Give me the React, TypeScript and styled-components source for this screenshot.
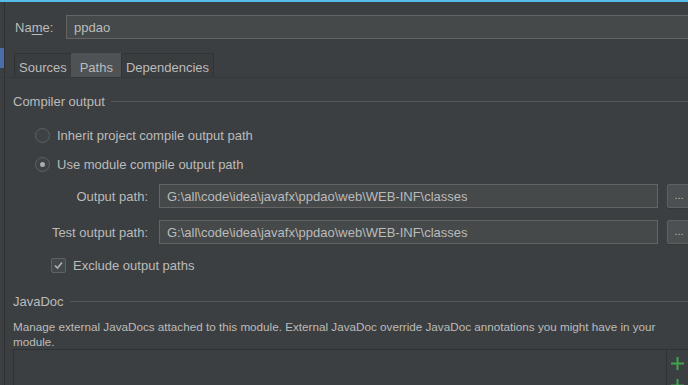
import React from "react";
import styled, { createGlobalStyle } from "styled-components";

const Global = createGlobalStyle`
  html, body { margin: 0; padding: 0; background: #3c3f41; }
  body { font-family: "Liberation Sans", Arial, sans-serif; font-size: 13px; color: #bbbbbb; }
`;

const Frame = styled.div`
  width: 688px;
  height: 385px;
  overflow: hidden;
  box-sizing: border-box;
  border-top: 2px solid #55bdea;
  background: #3c3f41;
  display: flex;
`;

const Sidebar = styled.div`
  width: 4px;
  flex-shrink: 0;
  border-right: 1px solid #2e3032;
  padding-top: 46px;
`;

const Marker = styled.div`
  height: 20px;
  background: #4a6ea9;
`;

const Main = styled.div`
  flex: 1;
  min-width: 0;
  display: flex;
  flex-direction: column;
`;

const NameRow = styled.div`
  display: flex;
  align-items: center;
  margin-top: 13px;
  padding-left: 10px;
`;

const NameLabel = styled.label`
  width: 51px;
  flex-shrink: 0;
  u { text-decoration: underline; text-underline-offset: 2px; }
`;

const TextField = styled.div<{ $grow?: boolean }>`
  box-sizing: border-box;
  height: 24px;
  background: #45494a;
  border: 1px solid #646464;
  padding: 0 7px;
  display: flex;
  align-items: center;
  white-space: nowrap;
  overflow: hidden;
  color: #bbbbbb;
  ${(p) => (p.$grow ? "flex: 1; margin-right: -1px;" : "width: 499px; flex-shrink: 0;")}
`;

const TabStrip = styled.div`
  display: flex;
  margin-top: 14px;
  padding-left: 9px;
  height: 24px;
`;

const Tab = styled.div<{ $active?: boolean }>`
  box-sizing: border-box;
  height: 24px;
  padding: 3px ${(p) => (p.$active ? "8px" : "4px")} 0;
  display: flex;
  align-items: center;
  border: 1px solid ${(p) => (p.$active ? "#4e5254" : "#313335")};
  border-bottom: none;
  background: ${(p) => (p.$active ? "#4e5254" : "#3a3d3f")};
  & + & { margin-left: -1px; }
`;

const TabBar = styled.div`
  height: 3px;
  background: #4e5254;
  border-bottom: 1px solid #353739;
`;

const Content = styled.div`
  display: flex;
  flex-direction: column;
  padding-left: 8px;
`;

const Titled = styled.div<{ $top: number }>`
  display: flex;
  align-items: center;
  gap: 6px;
  height: 16px;
  margin-top: ${(p) => p.$top}px;
`;

const TitleLine = styled.div`
  flex: 1;
  height: 1px;
  background: #515658;
`;

const OptionRow = styled.div<{ $top: number; $indent: number }>`
  display: flex;
  align-items: center;
  height: 20px;
  gap: 7px;
  margin-top: ${(p) => p.$top}px;
  padding-left: ${(p) => p.$indent}px;
`;

const Radio = styled.span<{ $on?: boolean }>`
  box-sizing: border-box;
  width: 15px;
  height: 15px;
  border-radius: 50%;
  border: 1px solid #5e6264;
  background: #3e4244;
  display: flex;
  align-items: center;
  justify-content: center;
  &::after {
    content: "";
    width: 5px;
    height: 5px;
    border-radius: 50%;
    background: ${(p) => (p.$on ? "#a9abad" : "transparent")};
  }
`;

const Checkbox = styled.span`
  box-sizing: border-box;
  width: 15px;
  height: 15px;
  border-radius: 2px;
  border: 1px solid #5e6264;
  background: #43494a;
  display: flex;
  align-items: center;
  justify-content: center;
`;

const PathRow = styled.div<{ $top: number }>`
  display: flex;
  align-items: center;
  height: 24px;
  margin-top: ${(p) => p.$top}px;
`;

const PathLabel = styled.div`
  width: 135px;
  flex-shrink: 0;
  text-align: right;
  margin-right: 11px;
`;

const Browse = styled.div`
  box-sizing: border-box;
  width: 24px;
  height: 24px;
  flex-shrink: 0;
  margin-left: 9px;
  background: #4c5052;
  border: 1px solid #5e6060;
  box-shadow: 1px 1px 0 #353738;
  border-radius: 2px;
  display: flex;
  align-items: center;
  justify-content: center;
  padding-bottom: 2px;
  font-size: 11px;
  color: #bbbbbb;
`;

const Description = styled.div`
  margin-top: 10px;
  padding-right: 14px;
  font-size: 11.7px;
  line-height: 15px;
`;

const Table = styled.div`
  flex: 1;
  display: flex;
  border-top: 1px solid #2f3133;
  border-left: 1px solid #2f3133;
  margin: 0 0 0 8px;
`;

const TableBody = styled.div`
  flex: 1;
`;

const TableTools = styled.div`
  width: 21px;
  flex-shrink: 0;
  border-left: 1px solid #2f3133;
  display: flex;
  flex-direction: column;
  align-items: center;
  padding-top: 7px;
  gap: 9px;
`;

const Plus = () => (
  <svg width="13" height="13" viewBox="0 0 13 13">
    <rect x="5.5" y="0" width="2" height="13" fill="#3fa34d" />
    <rect x="0" y="5.5" width="13" height="2" fill="#3fa34d" />
  </svg>
);

const Check = () => (
  <svg width="11" height="11" viewBox="0 0 11 11">
    <path d="M2 5.5 L4.5 8 L9 2.5" stroke="#b0b2b4" strokeWidth="1.6" fill="none" />
  </svg>
);

export default function App() {
  const path = "G:\\all\\code\\idea\\javafx\\ppdao\\web\\WEB-INF\\classes";
  return (
    <>
      <Global />
      <Frame>
        <Sidebar>
          <Marker />
        </Sidebar>
        <Main>
          <NameRow>
            <NameLabel>
              Na<u>m</u>e:
            </NameLabel>
            <TextField $grow>ppdao</TextField>
          </NameRow>
          <TabStrip>
            <Tab>Sources</Tab>
            <Tab $active>Paths</Tab>
            <Tab>Dependencies</Tab>
          </TabStrip>
          <TabBar />
          <Content>
            <Titled $top={15}>
              <span>Compiler output</span>
              <TitleLine />
            </Titled>
            <OptionRow $top={16} $indent={22}>
              <Radio />
              <span>Inherit project compile output path</span>
            </OptionRow>
            <OptionRow $top={9} $indent={22}>
              <Radio $on />
              <span>Use module compile output path</span>
            </OptionRow>
            <PathRow $top={10}>
              <PathLabel>Output path:</PathLabel>
              <TextField>{path}</TextField>
              <Browse>...</Browse>
            </PathRow>
            <PathRow $top={12}>
              <PathLabel>Test output path:</PathLabel>
              <TextField>{path}</TextField>
              <Browse>...</Browse>
            </PathRow>
            <OptionRow $top={11} $indent={38}>
              <Checkbox>
                <Check />
              </Checkbox>
              <span>Exclude output paths</span>
            </OptionRow>
            <Titled $top={18}>
              <span>JavaDoc</span>
              <TitleLine />
            </Titled>
            <Description>
              Manage external JavaDocs attached to this module. External JavaDoc override JavaDoc annotations you
              might have in your module.
            </Description>
          </Content>
          <Table>
            <TableBody />
            <TableTools>
              <Plus />
              <Plus />
            </TableTools>
          </Table>
        </Main>
      </Frame>
    </>
  );
}
